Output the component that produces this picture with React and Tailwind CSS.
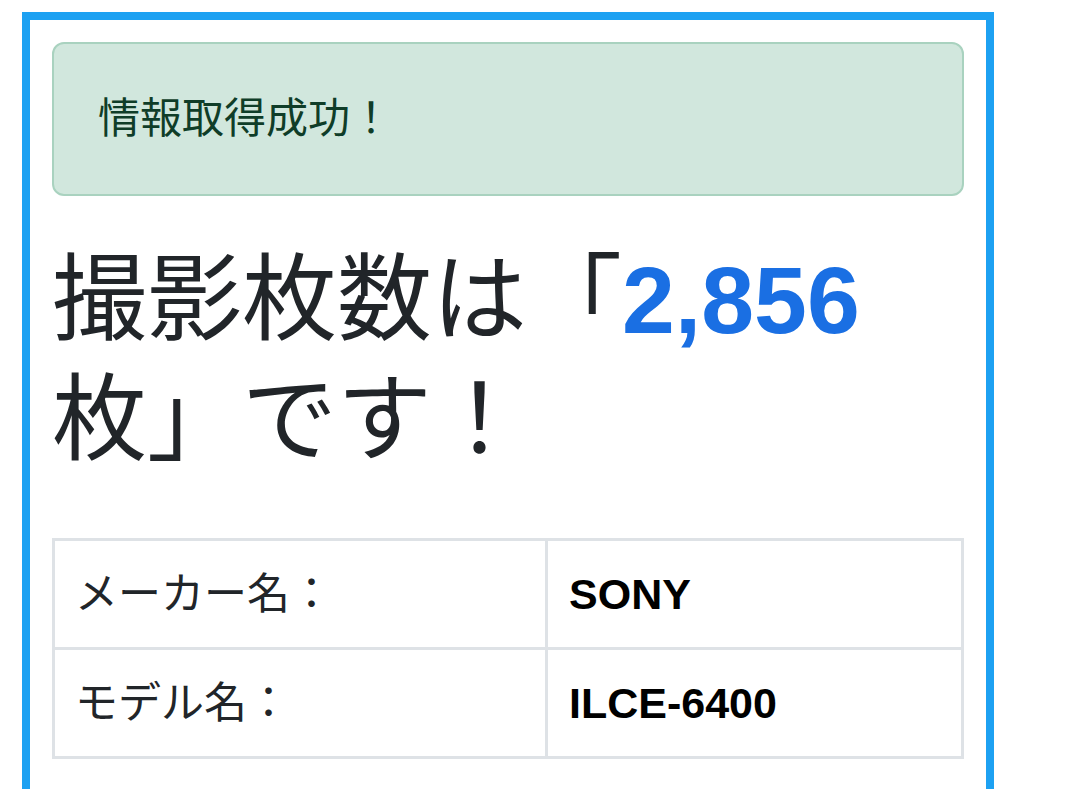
export default function App() {
  const rows = [
    { label: "メーカー名：", value: "SONY" },
    { label: "モデル名：", value: "ILCE-6400" },
  ];

  return (
    <div
      className="min-h-screen bg-white pl-[22px] pt-[12px] text-[#212529]"
      style={{ fontFamily: '"Liberation Sans", "Noto Sans CJK JP", sans-serif' }}
    >
      <div className="w-[972px] min-h-[820px] border-[8px] border-b-0 border-[#1da1f2] px-[22px] pt-[22px]">
        {/* 結果メッセージ */}
        <div className="flex h-[154px] items-center rounded-[12px] border-2 border-[#a9d2bf] bg-[#d1e7dd] pb-[2px] pl-[44px] text-[42px] text-[#0f3d28]">
          情報取得成功！
        </div>

        <h1 className="mt-[44px] text-[95px] font-normal leading-[120px]">
          撮影枚数は「<span className="font-bold text-[#1a6fe3]">2,856</span>枚」です！
        </h1>

        <table className="mt-[58px] w-full border-collapse text-[43px]">
          <tbody>
            {rows.map((row) => (
              <tr key={row.label}>
                <td className="h-[109px] w-[493px] border-[3px] border-[#dee2e6] px-[20px] align-middle">
                  {row.label}
                </td>
                <td className="h-[109px] border-[3px] border-[#dee2e6] px-[21px] align-middle font-bold text-black">
                  {row.value}
                </td>
              </tr>
            ))}
          </tbody>
        </table>
      </div>
    </div>
  );
}
